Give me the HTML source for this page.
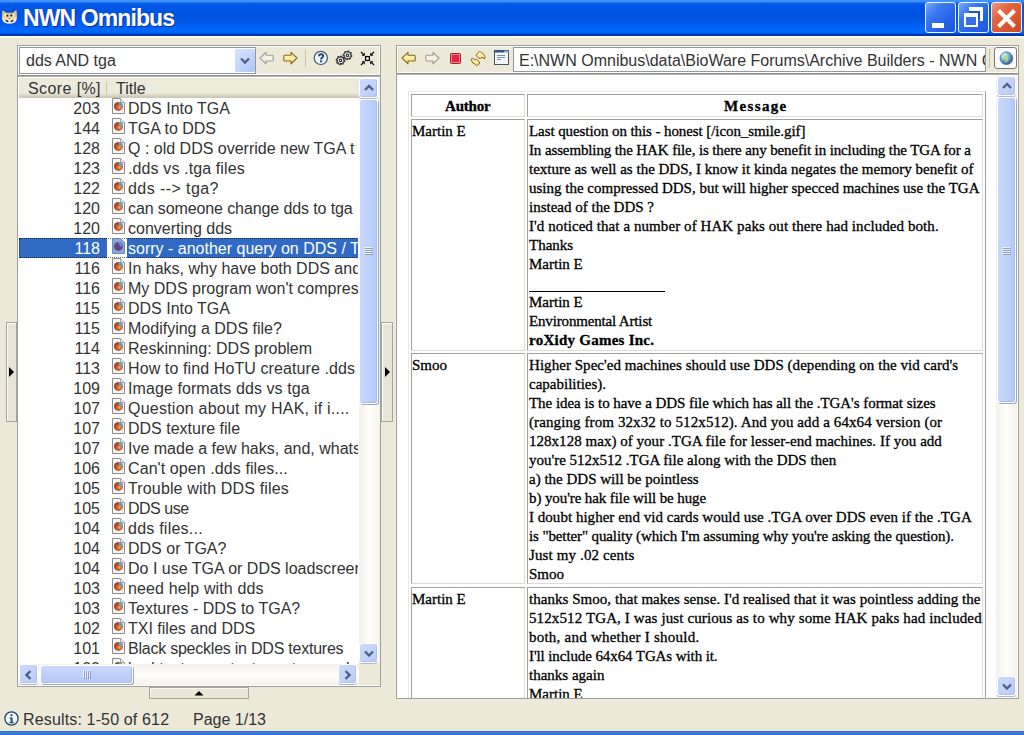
<!DOCTYPE html>
<html><head><meta charset="utf-8">
<style>
*{box-sizing:border-box}
html,body{margin:0;padding:0}
body{width:1024px;height:735px;overflow:hidden;position:relative;background:#ECE9D8;font-family:"Liberation Sans",sans-serif;font-size:16px;color:#000}
.a{position:absolute}
.t16{font-size:16px;line-height:20px;white-space:nowrap;color:#333}
.serif{font-family:"Liberation Serif",serif;font-size:15px;line-height:19px;white-space:nowrap;-webkit-text-stroke:0.3px #000}
.sbtn{position:absolute;width:19px;height:20px;border:1px solid #fff;border-radius:3px;background:linear-gradient(135deg,#CCD9FC 0%,#C2D2FA 60%,#B6CAF6 100%);box-shadow:inset -1px -1px 0 #B0C2EC, 0 1px 0 #AEB8C8}
.thumbv{position:absolute;border:1px solid #fff;border-radius:3px;background:linear-gradient(90deg,#CAD8FC,#BED0FA 60%,#B4C8F8);box-shadow:inset -1px -1px 0 #A8BCEA, 1px 1px 0 #98A8C4}
</style></head><body>
<svg width="0" height="0" style="position:absolute"><defs>
<radialGradient id="ff" cx="0.62" cy="0.6" r="0.62"><stop offset="0" stop-color="#E8B070"/><stop offset="0.45" stop-color="#C86030"/><stop offset="1" stop-color="#983818"/></radialGradient>
<linearGradient id="yel" x1="0" y1="0" x2="0" y2="1"><stop offset="0" stop-color="#FFFCE0"/><stop offset="1" stop-color="#F8DC6A"/></linearGradient>
<radialGradient id="globe" cx="0.35" cy="0.3" r="0.75"><stop offset="0" stop-color="#F4FFFF"/><stop offset="0.45" stop-color="#70B8D0"/><stop offset="1" stop-color="#3A4E98"/></radialGradient>
</defs></svg>

<div class="a" style="left:0;top:0;width:1024px;height:36px;background:linear-gradient(#3D95FF 0,#3A90FF 1.5px,#0A5EEA 3.5px,#0056E6 6px,#0053E0 15px,#005CEC 24px,#0068FF 30px,#0064F6 33px,#0038B8 34.5px,#0030A4 36px)"></div>
<div class="a" style="left:0;top:36px;width:1024px;height:2px;background:linear-gradient(#FFFFFF,#F7F6F0)"></div>
<svg class="a" style="left:1px;top:9px" width="17" height="16" viewBox="0 0 17 16">
<defs><linearGradient id="catg" x1="0" y1="0" x2="0" y2="1"><stop offset="0" stop-color="#D2B97E"/><stop offset=".5" stop-color="#E6D2A4"/><stop offset=".75" stop-color="#F8F0E8"/><stop offset="1" stop-color="#FAF8F4"/></linearGradient></defs>
<path d="M1.3 2.2Q1.6 1 2.6 1.8L5 3.8H12L14.6 1.3Q15.6 0.8 15.7 2.2L15.9 9Q15.9 14.6 8.5 14.8Q1 14.6 1 9Z" fill="url(#catg)"/>
<ellipse cx="5.6" cy="6.2" rx="2" ry="1.5" fill="#FFF6D0"/><ellipse cx="11.2" cy="6.2" rx="2" ry="1.5" fill="#FFF6D0"/>
<ellipse cx="6.4" cy="6.6" rx="1" ry="1.2" fill="#201808"/><ellipse cx="10.4" cy="6.4" rx="1" ry="1.2" fill="#201808"/>
<ellipse cx="8.4" cy="9.6" rx="1" ry=".8" fill="#B08050"/>
<path d="M4.6 11.4L7.4 12.6M9.6 12.6L12.4 11.4" stroke="#1a1410" stroke-width="1.5"/>
</svg>
<div class="a" style="left:23px;top:5px;color:#fff;font-weight:bold;font-size:23px;letter-spacing:-0.9px;line-height:26px;white-space:nowrap;text-shadow:1px 1px 0 #0F2C9C">NWN Omnibus</div>
<div class="a" style="left:925px;top:2px;width:31px;height:31px;border:1px solid #EEF6FF;border-radius:3px;background:linear-gradient(135deg,#7AA8FA 0%,#3C7AF2 30%,#2763E8 65%,#1F57DA 100%)"><div class="a" style="left:6px;top:20px;width:12px;height:5px;background:#fff"></div></div>
<div class="a" style="left:958px;top:2px;width:31px;height:31px;border:1px solid #EEF6FF;border-radius:3px;background:linear-gradient(135deg,#7AA8FA 0%,#3C7AF2 30%,#2763E8 65%,#1F57DA 100%)"><div class="a" style="left:10px;top:8px;width:11px;height:8px;background:#2350C8"></div><div class="a" style="left:10px;top:4px;width:14px;height:3.5px;background:#fff"></div><div class="a" style="left:21px;top:4px;width:3px;height:14px;background:#fff"></div><div class="a" style="left:5px;top:10px;width:14px;height:14px;background:#3A6EE8;border:2px solid #fff;border-top-width:4px"></div></div>
<div class="a" style="left:991px;top:2px;width:31px;height:31px;border:1px solid #EEF6FF;border-radius:3px;background:linear-gradient(135deg,#F09A7A 0%,#E2663E 35%,#D8502A 75%,#C84A26 100%)"><svg class="a" style="left:4px;top:5px" width="21" height="21" viewBox="0 0 21 21"><path d="M2.5 2.5L18.5 18.5M18.5 2.5L2.5 18.5" stroke="#fff" stroke-width="3.9"/></svg></div>
<div class="a" style="left:0;top:730px;width:1024px;height:5px;background:linear-gradient(#DEEEFC 0,#DEEEFC 1px,#3E6AA6 1px,#3E6AA6 2px,#4482D6 2px,#4482D6 3px,#2F79E0 3px)"></div>
<div class="a" style="left:17px;top:45px;width:364px;height:642px;border:1px solid #A0A09B;background:#ECE9D8;box-shadow:inset 1px 1px 0 #fff"></div>
<div class="a" style="left:19px;top:47px;width:237px;height:27px;border:1px solid #8D99A3;background:#fff"></div>
<div class="a t16" style="left:26px;top:51px">dds AND tga</div>
<div class="a" style="left:235px;top:49px;width:20px;height:23px;border-radius:2px;background:linear-gradient(135deg,#D8E4FD,#BCD0FA 70%,#B0C6F6)"></div>
<svg class="a" style="left:240px;top:57px" width="10" height="7" viewBox="0 0 10 7"><path d="M1 1.5L5 5.5L9 1.5" stroke="#4D6185" stroke-width="2.4" fill="none"/></svg>
<svg class="a" style="left:259px;top:51px" width="15" height="14" viewBox="0 0 15 14"><path d="M1 7L7 1.3V4.3H13.2C13.8 4.3 14.2 4.7 14.2 5.3V9C14.2 9.6 13.8 10 13.2 10H7V12.9Z" fill="#F2F0E8" stroke="#A09E94" stroke-width="1.1" stroke-linejoin="round"/></svg>
<svg class="a" style="left:283px;top:51px" width="15" height="14" viewBox="0 0 15 14"><path d="M14 7L8 1.3V4.3H1.8C1.2 4.3 0.8 4.7 0.8 5.3V9C0.8 9.6 1.2 10 1.8 10H8V12.9Z" fill="url(#yel)" stroke="#8A6A18" stroke-width="1.1" stroke-linejoin="round"/></svg>
<div class="a" style="left:305px;top:50px;width:1px;height:17px;background:#C5C2B2"></div>
<svg class="a" style="left:313px;top:50px" width="16" height="16" viewBox="0 0 16 16"><circle cx="7.8" cy="7.9" r="6.6" fill="#EEF6FB" stroke="#3E5878" stroke-width="1.2"/><path d="M6 6.3C6 4.9 7 4.3 8.1 4.3C9.3 4.3 10.2 5 10.2 6.1C10.2 7.2 9.3 7.6 8.7 8.1C8.2 8.5 8.1 8.8 8.1 9.6" fill="none" stroke="#24466E" stroke-width="1.9"/><rect x="7.1" y="10.4" width="2" height="1.9" fill="#24466E"/></svg>
<svg class="a" style="left:334px;top:49px" width="20" height="18" viewBox="0 0 20 18"><path d="M10.78 11.82 L10.61 12.65 L9.38 12.94 L9.03 13.47 L9.23 14.72 L8.53 15.19 L7.45 14.53 L6.82 14.65 L6.08 15.68 L5.25 15.51 L4.96 14.28 L4.43 13.93 L3.18 14.13 L2.71 13.43 L3.37 12.35 L3.25 11.72 L2.22 10.98 L2.39 10.15 L3.62 9.86 L3.97 9.33 L3.77 8.08 L4.47 7.61 L5.55 8.27 L6.18 8.15 L6.92 7.12 L7.75 7.29 L8.04 8.52 L8.57 8.87 L9.82 8.67 L10.29 9.37 L9.63 10.45 L9.75 11.08Z" fill="#FFFFFF" stroke="#333" stroke-width="1.25" stroke-linejoin="round"/><circle cx="6.5" cy="11.4" r="1.25" fill="#fff" stroke="#333" stroke-width="1.2"/><path d="M17.78 6.72 L17.61 7.55 L16.38 7.84 L16.03 8.37 L16.23 9.62 L15.53 10.09 L14.45 9.43 L13.82 9.55 L13.08 10.58 L12.25 10.41 L11.96 9.18 L11.43 8.83 L10.18 9.03 L9.71 8.33 L10.37 7.25 L10.25 6.62 L9.22 5.88 L9.39 5.05 L10.62 4.76 L10.97 4.23 L10.77 2.98 L11.47 2.51 L12.55 3.17 L13.18 3.05 L13.92 2.02 L14.75 2.19 L15.04 3.42 L15.57 3.77 L16.82 3.57 L17.29 4.27 L16.63 5.35 L16.75 5.98Z" fill="#FFFFFF" stroke="#333" stroke-width="1.25" stroke-linejoin="round"/><circle cx="13.5" cy="6.3" r="1.25" fill="#fff" stroke="#333" stroke-width="1.2"/></svg>
<svg class="a" style="left:360px;top:51px" width="15" height="15" viewBox="0 0 15 15"><rect x="5.6" y="5.6" width="3.8" height="3.8" fill="#fff" stroke="#000" stroke-width="1.3"/><path d="M1 1L3.6 3.6M14 1L11.4 3.6M1 14L3.6 11.4M14 14L11.4 11.4" stroke="#000" stroke-width="1.2"/><path d="M1.6 4.8H4.8V1.6Z M13.4 4.8H10.2V1.6Z M1.6 10.2H4.8V13.4Z M13.4 10.2H10.2V13.4Z" fill="#000"/></svg>
<div class="a" style="left:379px;top:46px;width:1px;height:29px;background:#fff"></div>
<div class="a" style="left:18px;top:74px;width:362px;height:1px;background:#fff"></div>
<div class="a" style="left:18px;top:75px;width:362px;height:2px;background:linear-gradient(#8E8E8A 0,#8E8E8A 1px,#B6B4AA 1px)"></div>
<div class="a" style="left:18px;top:77px;width:362px;height:609px;background:#fff"></div>
<div class="a" style="left:19px;top:78px;width:340px;height:20px;background:linear-gradient(#EBEADB 0,#EBEADB 15px,#E4E2D3 16px,#DCD9C9 17px,#D2CFBF 18px,#C9C6B6 20px)"></div>
<div class="a t16" style="left:28px;top:79px;letter-spacing:0.4px">Score [%]</div>
<div class="a" style="left:106px;top:82px;width:1px;height:12px;background:#C7C5B2"></div>
<div class="a t16" style="left:116px;top:79px">Title</div>
<div class="a" style="left:19px;top:98px;width:339px;height:566px;overflow:hidden">
<svg class="a" style="left:93px;top:0px" width="14" height="17" viewBox="0 0 14 17"><path d="M0.5 0.5H8.5L12.5 4.5V15.5H0.5Z" fill="#F6F6F4" stroke="#8C8C8C"/><path d="M8.5 0.5V4.5H12.5" fill="#E8E8E8" stroke="#A8A8A8"/><circle cx="6.5" cy="8.4" r="4.5" fill="url(#ff)"/><path d="M6.3 3.9A4.5 4.5 0 0 1 11 8.2L8.2 8.6Q7 6.5 6.3 3.9Z" fill="#6AA0C0"/></svg>
<div class="a t16" style="right:258px;top:1px;color:#333">203</div>
<div class="a t16" style="left:109px;top:1px;color:#333">DDS Into TGA</div>
<svg class="a" style="left:93px;top:20px" width="14" height="17" viewBox="0 0 14 17"><path d="M0.5 0.5H8.5L12.5 4.5V15.5H0.5Z" fill="#F6F6F4" stroke="#8C8C8C"/><path d="M8.5 0.5V4.5H12.5" fill="#E8E8E8" stroke="#A8A8A8"/><circle cx="6.5" cy="8.4" r="4.5" fill="url(#ff)"/><path d="M6.3 3.9A4.5 4.5 0 0 1 11 8.2L8.2 8.6Q7 6.5 6.3 3.9Z" fill="#6AA0C0"/></svg>
<div class="a t16" style="right:258px;top:21px;color:#333">144</div>
<div class="a t16" style="left:109px;top:21px;color:#333">TGA to DDS</div>
<svg class="a" style="left:93px;top:40px" width="14" height="17" viewBox="0 0 14 17"><path d="M0.5 0.5H8.5L12.5 4.5V15.5H0.5Z" fill="#F6F6F4" stroke="#8C8C8C"/><path d="M8.5 0.5V4.5H12.5" fill="#E8E8E8" stroke="#A8A8A8"/><circle cx="6.5" cy="8.4" r="4.5" fill="url(#ff)"/><path d="M6.3 3.9A4.5 4.5 0 0 1 11 8.2L8.2 8.6Q7 6.5 6.3 3.9Z" fill="#6AA0C0"/></svg>
<div class="a t16" style="right:258px;top:41px;color:#333">128</div>
<div class="a t16" style="left:109px;top:41px;color:#333">Q : old DDS override new TGA t</div>
<svg class="a" style="left:93px;top:60px" width="14" height="17" viewBox="0 0 14 17"><path d="M0.5 0.5H8.5L12.5 4.5V15.5H0.5Z" fill="#F6F6F4" stroke="#8C8C8C"/><path d="M8.5 0.5V4.5H12.5" fill="#E8E8E8" stroke="#A8A8A8"/><circle cx="6.5" cy="8.4" r="4.5" fill="url(#ff)"/><path d="M6.3 3.9A4.5 4.5 0 0 1 11 8.2L8.2 8.6Q7 6.5 6.3 3.9Z" fill="#6AA0C0"/></svg>
<div class="a t16" style="right:258px;top:61px;color:#333">123</div>
<div class="a t16" style="left:109px;top:61px;color:#333;letter-spacing:0.118px">.dds vs .tga files</div>
<svg class="a" style="left:93px;top:80px" width="14" height="17" viewBox="0 0 14 17"><path d="M0.5 0.5H8.5L12.5 4.5V15.5H0.5Z" fill="#F6F6F4" stroke="#8C8C8C"/><path d="M8.5 0.5V4.5H12.5" fill="#E8E8E8" stroke="#A8A8A8"/><circle cx="6.5" cy="8.4" r="4.5" fill="url(#ff)"/><path d="M6.3 3.9A4.5 4.5 0 0 1 11 8.2L8.2 8.6Q7 6.5 6.3 3.9Z" fill="#6AA0C0"/></svg>
<div class="a t16" style="right:258px;top:81px;color:#333">122</div>
<div class="a t16" style="left:109px;top:81px;color:#333;letter-spacing:0.418px">dds --&gt; tga?</div>
<svg class="a" style="left:93px;top:100px" width="14" height="17" viewBox="0 0 14 17"><path d="M0.5 0.5H8.5L12.5 4.5V15.5H0.5Z" fill="#F6F6F4" stroke="#8C8C8C"/><path d="M8.5 0.5V4.5H12.5" fill="#E8E8E8" stroke="#A8A8A8"/><circle cx="6.5" cy="8.4" r="4.5" fill="url(#ff)"/><path d="M6.3 3.9A4.5 4.5 0 0 1 11 8.2L8.2 8.6Q7 6.5 6.3 3.9Z" fill="#6AA0C0"/></svg>
<div class="a t16" style="right:258px;top:101px;color:#333">120</div>
<div class="a t16" style="left:109px;top:101px;color:#333;letter-spacing:-0.107px">can someone change dds to tga</div>
<svg class="a" style="left:93px;top:120px" width="14" height="17" viewBox="0 0 14 17"><path d="M0.5 0.5H8.5L12.5 4.5V15.5H0.5Z" fill="#F6F6F4" stroke="#8C8C8C"/><path d="M8.5 0.5V4.5H12.5" fill="#E8E8E8" stroke="#A8A8A8"/><circle cx="6.5" cy="8.4" r="4.5" fill="url(#ff)"/><path d="M6.3 3.9A4.5 4.5 0 0 1 11 8.2L8.2 8.6Q7 6.5 6.3 3.9Z" fill="#6AA0C0"/></svg>
<div class="a t16" style="right:258px;top:121px;color:#333">120</div>
<div class="a t16" style="left:109px;top:121px;color:#333">converting dds</div>
<div class="a" style="left:0;top:140px;width:88px;height:20px;background:#316AC5"></div>
<div class="a" style="left:108px;top:140px;width:240px;height:20px;background:#316AC5"></div>
<div class="a" style="left:0;top:140px;width:360px;height:20px;border:1px dotted #000;opacity:.55"></div>
<svg class="a" style="left:93px;top:140px" width="14" height="17" viewBox="0 0 14 17"><path d="M0.5 0.5H8.5L12.5 4.5V15.5H0.5Z" fill="#8FA6DA" stroke="#7088C8"/><circle cx="6.5" cy="8.4" r="4.5" fill="#5A4A8A"/><path d="M6.3 3.9A4.5 4.5 0 0 1 11 8.2L8.2 8.6Q7 6.5 6.3 3.9Z" fill="#6A8CC8"/></svg>
<div class="a t16" style="right:258px;top:141px;color:#fff">118</div>
<div class="a t16" style="left:109px;top:141px;color:#fff">sorry - another query on DDS / TGA</div>
<svg class="a" style="left:93px;top:160px" width="14" height="17" viewBox="0 0 14 17"><path d="M0.5 0.5H8.5L12.5 4.5V15.5H0.5Z" fill="#F6F6F4" stroke="#8C8C8C"/><path d="M8.5 0.5V4.5H12.5" fill="#E8E8E8" stroke="#A8A8A8"/><circle cx="6.5" cy="8.4" r="4.5" fill="url(#ff)"/><path d="M6.3 3.9A4.5 4.5 0 0 1 11 8.2L8.2 8.6Q7 6.5 6.3 3.9Z" fill="#6AA0C0"/></svg>
<div class="a t16" style="right:258px;top:161px;color:#333">116</div>
<div class="a t16" style="left:109px;top:161px;color:#333">In haks, why have both DDS and TGA</div>
<svg class="a" style="left:93px;top:180px" width="14" height="17" viewBox="0 0 14 17"><path d="M0.5 0.5H8.5L12.5 4.5V15.5H0.5Z" fill="#F6F6F4" stroke="#8C8C8C"/><path d="M8.5 0.5V4.5H12.5" fill="#E8E8E8" stroke="#A8A8A8"/><circle cx="6.5" cy="8.4" r="4.5" fill="url(#ff)"/><path d="M6.3 3.9A4.5 4.5 0 0 1 11 8.2L8.2 8.6Q7 6.5 6.3 3.9Z" fill="#6AA0C0"/></svg>
<div class="a t16" style="right:258px;top:181px;color:#333">116</div>
<div class="a t16" style="left:109px;top:181px;color:#333">My DDS program won't compress</div>
<svg class="a" style="left:93px;top:200px" width="14" height="17" viewBox="0 0 14 17"><path d="M0.5 0.5H8.5L12.5 4.5V15.5H0.5Z" fill="#F6F6F4" stroke="#8C8C8C"/><path d="M8.5 0.5V4.5H12.5" fill="#E8E8E8" stroke="#A8A8A8"/><circle cx="6.5" cy="8.4" r="4.5" fill="url(#ff)"/><path d="M6.3 3.9A4.5 4.5 0 0 1 11 8.2L8.2 8.6Q7 6.5 6.3 3.9Z" fill="#6AA0C0"/></svg>
<div class="a t16" style="right:258px;top:201px;color:#333">115</div>
<div class="a t16" style="left:109px;top:201px;color:#333">DDS Into TGA</div>
<svg class="a" style="left:93px;top:220px" width="14" height="17" viewBox="0 0 14 17"><path d="M0.5 0.5H8.5L12.5 4.5V15.5H0.5Z" fill="#F6F6F4" stroke="#8C8C8C"/><path d="M8.5 0.5V4.5H12.5" fill="#E8E8E8" stroke="#A8A8A8"/><circle cx="6.5" cy="8.4" r="4.5" fill="url(#ff)"/><path d="M6.3 3.9A4.5 4.5 0 0 1 11 8.2L8.2 8.6Q7 6.5 6.3 3.9Z" fill="#6AA0C0"/></svg>
<div class="a t16" style="right:258px;top:221px;color:#333">115</div>
<div class="a t16" style="left:109px;top:221px;color:#333">Modifying a DDS file?</div>
<svg class="a" style="left:93px;top:240px" width="14" height="17" viewBox="0 0 14 17"><path d="M0.5 0.5H8.5L12.5 4.5V15.5H0.5Z" fill="#F6F6F4" stroke="#8C8C8C"/><path d="M8.5 0.5V4.5H12.5" fill="#E8E8E8" stroke="#A8A8A8"/><circle cx="6.5" cy="8.4" r="4.5" fill="url(#ff)"/><path d="M6.3 3.9A4.5 4.5 0 0 1 11 8.2L8.2 8.6Q7 6.5 6.3 3.9Z" fill="#6AA0C0"/></svg>
<div class="a t16" style="right:258px;top:241px;color:#333">114</div>
<div class="a t16" style="left:109px;top:241px;color:#333">Reskinning: DDS problem</div>
<svg class="a" style="left:93px;top:260px" width="14" height="17" viewBox="0 0 14 17"><path d="M0.5 0.5H8.5L12.5 4.5V15.5H0.5Z" fill="#F6F6F4" stroke="#8C8C8C"/><path d="M8.5 0.5V4.5H12.5" fill="#E8E8E8" stroke="#A8A8A8"/><circle cx="6.5" cy="8.4" r="4.5" fill="url(#ff)"/><path d="M6.3 3.9A4.5 4.5 0 0 1 11 8.2L8.2 8.6Q7 6.5 6.3 3.9Z" fill="#6AA0C0"/></svg>
<div class="a t16" style="right:258px;top:261px;color:#333">113</div>
<div class="a t16" style="left:109px;top:261px;color:#333;letter-spacing:0.103px">How to find HoTU creature .dds</div>
<svg class="a" style="left:93px;top:280px" width="14" height="17" viewBox="0 0 14 17"><path d="M0.5 0.5H8.5L12.5 4.5V15.5H0.5Z" fill="#F6F6F4" stroke="#8C8C8C"/><path d="M8.5 0.5V4.5H12.5" fill="#E8E8E8" stroke="#A8A8A8"/><circle cx="6.5" cy="8.4" r="4.5" fill="url(#ff)"/><path d="M6.3 3.9A4.5 4.5 0 0 1 11 8.2L8.2 8.6Q7 6.5 6.3 3.9Z" fill="#6AA0C0"/></svg>
<div class="a t16" style="right:258px;top:281px;color:#333">109</div>
<div class="a t16" style="left:109px;top:281px;color:#333;letter-spacing:0.087px">Image formats dds vs tga</div>
<svg class="a" style="left:93px;top:300px" width="14" height="17" viewBox="0 0 14 17"><path d="M0.5 0.5H8.5L12.5 4.5V15.5H0.5Z" fill="#F6F6F4" stroke="#8C8C8C"/><path d="M8.5 0.5V4.5H12.5" fill="#E8E8E8" stroke="#A8A8A8"/><circle cx="6.5" cy="8.4" r="4.5" fill="url(#ff)"/><path d="M6.3 3.9A4.5 4.5 0 0 1 11 8.2L8.2 8.6Q7 6.5 6.3 3.9Z" fill="#6AA0C0"/></svg>
<div class="a t16" style="right:258px;top:301px;color:#333">107</div>
<div class="a t16" style="left:109px;top:301px;color:#333;letter-spacing:0.233px">Question about my HAK, if i....</div>
<svg class="a" style="left:93px;top:320px" width="14" height="17" viewBox="0 0 14 17"><path d="M0.5 0.5H8.5L12.5 4.5V15.5H0.5Z" fill="#F6F6F4" stroke="#8C8C8C"/><path d="M8.5 0.5V4.5H12.5" fill="#E8E8E8" stroke="#A8A8A8"/><circle cx="6.5" cy="8.4" r="4.5" fill="url(#ff)"/><path d="M6.3 3.9A4.5 4.5 0 0 1 11 8.2L8.2 8.6Q7 6.5 6.3 3.9Z" fill="#6AA0C0"/></svg>
<div class="a t16" style="right:258px;top:321px;color:#333">107</div>
<div class="a t16" style="left:109px;top:321px;color:#333">DDS texture file</div>
<svg class="a" style="left:93px;top:340px" width="14" height="17" viewBox="0 0 14 17"><path d="M0.5 0.5H8.5L12.5 4.5V15.5H0.5Z" fill="#F6F6F4" stroke="#8C8C8C"/><path d="M8.5 0.5V4.5H12.5" fill="#E8E8E8" stroke="#A8A8A8"/><circle cx="6.5" cy="8.4" r="4.5" fill="url(#ff)"/><path d="M6.3 3.9A4.5 4.5 0 0 1 11 8.2L8.2 8.6Q7 6.5 6.3 3.9Z" fill="#6AA0C0"/></svg>
<div class="a t16" style="right:258px;top:341px;color:#333">107</div>
<div class="a t16" style="left:109px;top:341px;color:#333">Ive made a few haks, and, whats</div>
<svg class="a" style="left:93px;top:360px" width="14" height="17" viewBox="0 0 14 17"><path d="M0.5 0.5H8.5L12.5 4.5V15.5H0.5Z" fill="#F6F6F4" stroke="#8C8C8C"/><path d="M8.5 0.5V4.5H12.5" fill="#E8E8E8" stroke="#A8A8A8"/><circle cx="6.5" cy="8.4" r="4.5" fill="url(#ff)"/><path d="M6.3 3.9A4.5 4.5 0 0 1 11 8.2L8.2 8.6Q7 6.5 6.3 3.9Z" fill="#6AA0C0"/></svg>
<div class="a t16" style="right:258px;top:361px;color:#333">106</div>
<div class="a t16" style="left:109px;top:361px;color:#333;letter-spacing:0.087px">Can't open .dds files...</div>
<svg class="a" style="left:93px;top:380px" width="14" height="17" viewBox="0 0 14 17"><path d="M0.5 0.5H8.5L12.5 4.5V15.5H0.5Z" fill="#F6F6F4" stroke="#8C8C8C"/><path d="M8.5 0.5V4.5H12.5" fill="#E8E8E8" stroke="#A8A8A8"/><circle cx="6.5" cy="8.4" r="4.5" fill="url(#ff)"/><path d="M6.3 3.9A4.5 4.5 0 0 1 11 8.2L8.2 8.6Q7 6.5 6.3 3.9Z" fill="#6AA0C0"/></svg>
<div class="a t16" style="right:258px;top:381px;color:#333">105</div>
<div class="a t16" style="left:109px;top:381px;color:#333;letter-spacing:0.143px">Trouble with DDS files</div>
<svg class="a" style="left:93px;top:400px" width="14" height="17" viewBox="0 0 14 17"><path d="M0.5 0.5H8.5L12.5 4.5V15.5H0.5Z" fill="#F6F6F4" stroke="#8C8C8C"/><path d="M8.5 0.5V4.5H12.5" fill="#E8E8E8" stroke="#A8A8A8"/><circle cx="6.5" cy="8.4" r="4.5" fill="url(#ff)"/><path d="M6.3 3.9A4.5 4.5 0 0 1 11 8.2L8.2 8.6Q7 6.5 6.3 3.9Z" fill="#6AA0C0"/></svg>
<div class="a t16" style="right:258px;top:401px;color:#333">105</div>
<div class="a t16" style="left:109px;top:401px;color:#333;letter-spacing:-0.500px">DDS use</div>
<svg class="a" style="left:93px;top:420px" width="14" height="17" viewBox="0 0 14 17"><path d="M0.5 0.5H8.5L12.5 4.5V15.5H0.5Z" fill="#F6F6F4" stroke="#8C8C8C"/><path d="M8.5 0.5V4.5H12.5" fill="#E8E8E8" stroke="#A8A8A8"/><circle cx="6.5" cy="8.4" r="4.5" fill="url(#ff)"/><path d="M6.3 3.9A4.5 4.5 0 0 1 11 8.2L8.2 8.6Q7 6.5 6.3 3.9Z" fill="#6AA0C0"/></svg>
<div class="a t16" style="right:258px;top:421px;color:#333">104</div>
<div class="a t16" style="left:109px;top:421px;color:#333;letter-spacing:0.236px">dds files...</div>
<svg class="a" style="left:93px;top:440px" width="14" height="17" viewBox="0 0 14 17"><path d="M0.5 0.5H8.5L12.5 4.5V15.5H0.5Z" fill="#F6F6F4" stroke="#8C8C8C"/><path d="M8.5 0.5V4.5H12.5" fill="#E8E8E8" stroke="#A8A8A8"/><circle cx="6.5" cy="8.4" r="4.5" fill="url(#ff)"/><path d="M6.3 3.9A4.5 4.5 0 0 1 11 8.2L8.2 8.6Q7 6.5 6.3 3.9Z" fill="#6AA0C0"/></svg>
<div class="a t16" style="right:258px;top:441px;color:#333">104</div>
<div class="a t16" style="left:109px;top:441px;color:#333">DDS or TGA?</div>
<svg class="a" style="left:93px;top:460px" width="14" height="17" viewBox="0 0 14 17"><path d="M0.5 0.5H8.5L12.5 4.5V15.5H0.5Z" fill="#F6F6F4" stroke="#8C8C8C"/><path d="M8.5 0.5V4.5H12.5" fill="#E8E8E8" stroke="#A8A8A8"/><circle cx="6.5" cy="8.4" r="4.5" fill="url(#ff)"/><path d="M6.3 3.9A4.5 4.5 0 0 1 11 8.2L8.2 8.6Q7 6.5 6.3 3.9Z" fill="#6AA0C0"/></svg>
<div class="a t16" style="right:258px;top:461px;color:#333">104</div>
<div class="a t16" style="left:109px;top:461px;color:#333">Do I use TGA or DDS loadscreens</div>
<svg class="a" style="left:93px;top:480px" width="14" height="17" viewBox="0 0 14 17"><path d="M0.5 0.5H8.5L12.5 4.5V15.5H0.5Z" fill="#F6F6F4" stroke="#8C8C8C"/><path d="M8.5 0.5V4.5H12.5" fill="#E8E8E8" stroke="#A8A8A8"/><circle cx="6.5" cy="8.4" r="4.5" fill="url(#ff)"/><path d="M6.3 3.9A4.5 4.5 0 0 1 11 8.2L8.2 8.6Q7 6.5 6.3 3.9Z" fill="#6AA0C0"/></svg>
<div class="a t16" style="right:258px;top:481px;color:#333">103</div>
<div class="a t16" style="left:109px;top:481px;color:#333;letter-spacing:0.118px">need help with dds</div>
<svg class="a" style="left:93px;top:500px" width="14" height="17" viewBox="0 0 14 17"><path d="M0.5 0.5H8.5L12.5 4.5V15.5H0.5Z" fill="#F6F6F4" stroke="#8C8C8C"/><path d="M8.5 0.5V4.5H12.5" fill="#E8E8E8" stroke="#A8A8A8"/><circle cx="6.5" cy="8.4" r="4.5" fill="url(#ff)"/><path d="M6.3 3.9A4.5 4.5 0 0 1 11 8.2L8.2 8.6Q7 6.5 6.3 3.9Z" fill="#6AA0C0"/></svg>
<div class="a t16" style="right:258px;top:501px;color:#333">103</div>
<div class="a t16" style="left:109px;top:501px;color:#333">Textures - DDS to TGA?</div>
<svg class="a" style="left:93px;top:520px" width="14" height="17" viewBox="0 0 14 17"><path d="M0.5 0.5H8.5L12.5 4.5V15.5H0.5Z" fill="#F6F6F4" stroke="#8C8C8C"/><path d="M8.5 0.5V4.5H12.5" fill="#E8E8E8" stroke="#A8A8A8"/><circle cx="6.5" cy="8.4" r="4.5" fill="url(#ff)"/><path d="M6.3 3.9A4.5 4.5 0 0 1 11 8.2L8.2 8.6Q7 6.5 6.3 3.9Z" fill="#6AA0C0"/></svg>
<div class="a t16" style="right:258px;top:521px;color:#333">102</div>
<div class="a t16" style="left:109px;top:521px;color:#333">TXI files and DDS</div>
<svg class="a" style="left:93px;top:540px" width="14" height="17" viewBox="0 0 14 17"><path d="M0.5 0.5H8.5L12.5 4.5V15.5H0.5Z" fill="#F6F6F4" stroke="#8C8C8C"/><path d="M8.5 0.5V4.5H12.5" fill="#E8E8E8" stroke="#A8A8A8"/><circle cx="6.5" cy="8.4" r="4.5" fill="url(#ff)"/><path d="M6.3 3.9A4.5 4.5 0 0 1 11 8.2L8.2 8.6Q7 6.5 6.3 3.9Z" fill="#6AA0C0"/></svg>
<div class="a t16" style="right:258px;top:541px;color:#333">101</div>
<div class="a t16" style="left:109px;top:541px;color:#333;letter-spacing:-0.231px">Black speckles in DDS textures</div>
<svg class="a" style="left:93px;top:560px" width="14" height="17" viewBox="0 0 14 17"><path d="M0.5 0.5H8.5L12.5 4.5V15.5H0.5Z" fill="#F6F6F4" stroke="#8C8C8C"/><path d="M8.5 0.5V4.5H12.5" fill="#E8E8E8" stroke="#A8A8A8"/><circle cx="6.5" cy="8.4" r="4.5" fill="url(#ff)"/><path d="M6.3 3.9A4.5 4.5 0 0 1 11 8.2L8.2 8.6Q7 6.5 6.3 3.9Z" fill="#6AA0C0"/></svg>
<div class="a t16" style="right:258px;top:561px;color:#333">100</div>
<div class="a t16" style="left:109px;top:561px;color:#333">bad textures - textures to are ok big?</div>
</div>
<div class="a" style="left:359px;top:77px;width:21px;height:587px;background:linear-gradient(90deg,#F3F1EC,#FEFEFB 50%,#F4F2EC)"></div>
<div class="sbtn" style="left:359px;top:78px"></div>
<svg class="a" style="left:364px;top:84px" width="10" height="8" viewBox="0 0 10 8"><path d="M1 6L5 2L9 6" stroke="#4D6185" stroke-width="2.3" fill="none"/></svg>
<div class="thumbv" style="left:359px;top:99px;width:19px;height:305px"></div>
<svg class="a" style="left:364px;top:246px" width="9" height="10"><path d="M0 1.5H8M0 3.5H8M0 5.5H8M0 7.5H8" stroke="#EEF4FE" stroke-width="1"/><path d="M1 2.5H9M1 4.5H9M1 6.5H9M1 8.5H9" stroke="#8E9CC6" stroke-width="1"/></svg>
<div class="sbtn" style="left:359px;top:643px"></div>
<svg class="a" style="left:364px;top:650px" width="10" height="7" viewBox="0 0 10 7"><path d="M1 1.5L5 5.5L9 1.5" stroke="#4D6185" stroke-width="2.4" fill="none"/></svg>
<div class="a" style="left:19px;top:664px;width:340px;height:21px;background:linear-gradient(#F3F1EC,#FEFEFB 50%,#F4F2EC)"></div>
<div class="a" style="left:359px;top:664px;width:21px;height:21px;background:#ECE9D8"></div>
<div class="sbtn" style="left:19px;top:664px"></div>
<svg class="a" style="left:25px;top:670px" width="7" height="10" viewBox="0 0 7 10"><path d="M5.5 1L1.5 5L5.5 9" stroke="#4D6185" stroke-width="2.4" fill="none"/></svg>
<div class="thumbv" style="left:40px;top:665px;width:93px;height:19px;background:linear-gradient(#C9D8FC,#BCCEFA 60%,#B5C9F8)"></div>
<svg class="a" style="left:82px;top:670px" width="10" height="9"><path d="M1.5 0V8M3.5 0V8M5.5 0V8M7.5 0V8" stroke="#EEF4FE"/><path d="M2.5 1V9M4.5 1V9M6.5 1V9M8.5 1V9" stroke="#8E9CC6"/></svg>
<div class="sbtn" style="left:338px;top:664px"></div>
<svg class="a" style="left:344px;top:670px" width="7" height="10" viewBox="0 0 7 10"><path d="M1.5 1L5.5 5L1.5 9" stroke="#4D6185" stroke-width="2.4" fill="none"/></svg>
<div class="a" style="left:6px;top:322px;width:11px;height:100px;border:1px solid #A7A69C;background:#E8E5D6;box-shadow:inset 1px 1px 0 #fff"></div>
<svg class="a" style="left:9px;top:367px" width="5" height="10" viewBox="0 0 5 10"><path d="M0 0L5 5L0 10Z" fill="#000"/></svg>
<div class="a" style="left:381px;top:322px;width:12px;height:100px;border:1px solid #A7A69C;background:#E8E5D6;box-shadow:inset 1px 1px 0 #fff"></div>
<svg class="a" style="left:385px;top:367px" width="5" height="10" viewBox="0 0 5 10"><path d="M0 0L5 5L0 10Z" fill="#000"/></svg>
<div class="a" style="left:149px;top:687px;width:100px;height:12px;border:1px solid #A7A69C;background:#EAE7D9;box-shadow:inset 1px 1px 0 #F8F8F4"></div>
<svg class="a" style="left:194px;top:691px" width="10" height="5" viewBox="0 0 10 5"><path d="M0.5 4.5L5 0L9.5 4.5Z" fill="#000"/></svg>
<div class="a" style="left:396px;top:45px;width:623px;height:654px;border:1px solid #A0A09B;background:#ECE9D8;box-shadow:inset 1px 1px 0 #fff"></div>
<svg class="a" style="left:401px;top:51px" width="15" height="14" viewBox="0 0 15 14"><path d="M1 7L7 1.3V4.3H13.2C13.8 4.3 14.2 4.7 14.2 5.3V9C14.2 9.6 13.8 10 13.2 10H7V12.9Z" fill="url(#yel)" stroke="#8A6A18" stroke-width="1.1" stroke-linejoin="round"/></svg>
<svg class="a" style="left:425px;top:51px" width="15" height="14" viewBox="0 0 15 14"><path d="M14 7L8 1.3V4.3H1.8C1.2 4.3 0.8 4.7 0.8 5.3V9C0.8 9.6 1.2 10 1.8 10H8V12.9Z" fill="#F2F0E8" stroke="#A09E94" stroke-width="1.1" stroke-linejoin="round"/></svg>
<div class="a" style="left:450px;top:53px;width:11px;height:11px;background:#E0283A;border:1px solid #9A2030;border-radius:1.5px;box-shadow:inset 0 0 0 1px #F08890"></div>
<svg class="a" style="left:469px;top:49px" width="18" height="18" viewBox="0 0 18 18"><path d="M7 6.2L10.6 2L12.2 3.6L14 4.4L16 7.4L15.6 9.8L13 8.2L11.2 9.6L9 8.6Z" fill="url(#yel)" stroke="#8A6A18" stroke-width="1" stroke-linejoin="round"/><path d="M2 10.2L3.6 9L5.2 11L7.2 10L10.6 13L10.2 15L7.6 16.8L6 15L3.8 14Z" fill="url(#yel)" stroke="#8A6A18" stroke-width="1" stroke-linejoin="round"/></svg>
<svg class="a" style="left:494px;top:50px" width="15" height="15" viewBox="0 0 15 15"><rect x="0.5" y="0.5" width="14" height="14" fill="#F2F8FC" stroke="#4A5260"/><rect x="0.5" y="0.5" width="10" height="2" fill="#2C5494"/><rect x="10.5" y="0.5" width="4" height="2" fill="#7AA8D8"/><path d="M3 5.5H11M3 7.5H11M3 9.5H7" stroke="#7890A8"/></svg>
<div class="a" style="left:513px;top:47px;width:473px;height:25px;border:1px solid #8D99A3;background:#fff;overflow:hidden">
<div class="a t16" style="left:5px;top:3px">E:\NWN Omnibus\data\BioWare Forums\Archive Builders - NWN Custom Content\sorry</div>
</div>
<div class="a" style="left:989px;top:49px;width:1px;height:19px;background:#C5C2B2"></div>
<div class="a" style="left:994px;top:47px;width:23px;height:22px;border:1px solid #7A7A78;border-radius:3px;background:#FBFDFE"></div>
<svg class="a" style="left:999px;top:51px" width="15" height="15" viewBox="0 0 15 15"><circle cx="7.4" cy="7.2" r="6.4" fill="url(#globe)" stroke="#3A5888" stroke-width=".6"/><path d="M4.5 4.2C5.6 3.8 6.8 4.6 7.4 5.6C8.2 6.6 9.6 6.4 9.8 7.6C10 8.8 8.6 9.4 8 10.6C7.6 11.4 7 11.8 6.6 11.2C6.2 10 7 9 6.2 8C5.4 7 4 6.2 4.5 4.2Z" fill="#B8D868" opacity=".9"/></svg>
<div class="a" style="left:1017px;top:46px;width:1px;height:27px;background:#fff"></div>
<div class="a" style="left:397px;top:72px;width:621px;height:1px;background:#fff"></div>
<div class="a" style="left:397px;top:73px;width:621px;height:2px;background:linear-gradient(#8E8E8A 0,#8E8E8A 1px,#B6B4AA 1px)"></div>
<div class="a" style="left:397px;top:75px;width:621px;height:623px;background:#fff"></div>
<div class="a" style="left:996px;top:75px;width:21px;height:623px;background:linear-gradient(90deg,#F3F1EC,#FEFEFB 50%,#F4F2EC)"></div>
<div class="sbtn" style="left:997px;top:76px"></div>
<svg class="a" style="left:1002px;top:82px" width="10" height="8" viewBox="0 0 10 8"><path d="M1 6L5 2L9 6" stroke="#4D6185" stroke-width="2.3" fill="none"/></svg>
<div class="thumbv" style="left:997px;top:97px;width:19px;height:306px"></div>
<svg class="a" style="left:1002px;top:246px" width="9" height="10"><path d="M0 1.5H8M0 3.5H8M0 5.5H8M0 7.5H8" stroke="#EEF4FE" stroke-width="1"/><path d="M1 2.5H9M1 4.5H9M1 6.5H9M1 8.5H9" stroke="#8E9CC6" stroke-width="1"/></svg>
<div class="sbtn" style="left:997px;top:676px"></div>
<svg class="a" style="left:1002px;top:683px" width="10" height="7" viewBox="0 0 10 7"><path d="M1 1.5L5 5.5L9 1.5" stroke="#4D6185" stroke-width="2.4" fill="none"/></svg>
<div class="a" style="left:397px;top:75px;width:599px;height:623px;overflow:hidden">
<div class="a" style="left:11px;top:16px;width:578px;height:700px;border-top:1px solid #E8E8E4;border-left:1px solid #E8E8E4;border-right:1px solid #A0A0A0"></div>
<div class="a" style="left:14px;top:19px;width:114px;height:23px;border:1px solid #DDDDD8;border-top-color:#A0A09C;border-left-color:#A0A09C"></div>
<div class="a" style="left:130px;top:19px;width:456px;height:23px;border:1px solid #DDDDD8;border-top-color:#A0A09C;border-left-color:#A0A09C"></div>
<div class="a" style="left:14px;top:44px;width:114px;height:232px;border:1px solid #DDDDD8;border-top-color:#A0A09C;border-left-color:#A0A09C"></div>
<div class="a" style="left:130px;top:44px;width:456px;height:232px;border:1px solid #DDDDD8;border-top-color:#A0A09C;border-left-color:#A0A09C"></div>
<div class="a" style="left:14px;top:278px;width:114px;height:231px;border:1px solid #DDDDD8;border-top-color:#A0A09C;border-left-color:#A0A09C"></div>
<div class="a" style="left:130px;top:278px;width:456px;height:231px;border:1px solid #DDDDD8;border-top-color:#A0A09C;border-left-color:#A0A09C"></div>
<div class="a" style="left:14px;top:512px;width:114px;height:140px;border:1px solid #DDDDD8;border-top-color:#A0A09C;border-left-color:#A0A09C"></div>
<div class="a" style="left:130px;top:512px;width:456px;height:140px;border:1px solid #DDDDD8;border-top-color:#A0A09C;border-left-color:#A0A09C"></div>
<div class="a serif" style="left:48px;top:22px;font-weight:bold;letter-spacing:-0.2px">Author</div>
<div class="a serif" style="left:327px;top:22px;font-weight:bold;letter-spacing:1.35px">Message</div>
<div class="a serif" style="left:15px;top:47px">Martin E</div>
<div class="a serif" style="left:132px;top:47px;letter-spacing:-0.085px">Last question on this - honest [/icon_smile.gif]</div>
<div class="a serif" style="left:132px;top:66px;letter-spacing:-0.122px">In assembling the HAK file, is there any benefit in including the TGA for a</div>
<div class="a serif" style="left:132px;top:85px">texture as well as the DDS, I know it kinda negates the memory benefit of</div>
<div class="a serif" style="left:132px;top:104px">using the compressed DDS, but will higher specced machines use the TGA</div>
<div class="a serif" style="left:132px;top:123px">instead of the DDS ?</div>
<div class="a serif" style="left:132px;top:142px;letter-spacing:0.077px">I'd noticed that a number of HAK paks out there had included both.</div>
<div class="a serif" style="left:132px;top:161px">Thanks</div>
<div class="a serif" style="left:132px;top:180px">Martin E</div>
<div class="a" style="left:132px;top:216px;width:136px;height:1px;background:#000"></div>
<div class="a serif" style="left:132px;top:218px">Martin E</div>
<div class="a serif" style="left:132px;top:237px;letter-spacing:-0.158px">Environmental Artist</div>
<div class="a serif" style="left:132px;top:256px;letter-spacing:0.250px"><b>roXidy Games Inc.</b></div>
<div class="a serif" style="left:15px;top:281px">Smoo</div>
<div class="a serif" style="left:132px;top:281px;letter-spacing:0.045px">Higher Spec'ed machines should use DDS (depending on the vid card's</div>
<div class="a serif" style="left:132px;top:300px">capabilities).</div>
<div class="a serif" style="left:132px;top:319px;letter-spacing:-0.045px">The idea is to have a DDS file which has all the .TGA's format sizes</div>
<div class="a serif" style="left:132px;top:338px;letter-spacing:0.103px">(ranging from 32x32 to 512x512). And you add a 64x64 version (or</div>
<div class="a serif" style="left:132px;top:357px;letter-spacing:0.031px">128x128 max) of your .TGA file for lesser-end machines. If you add</div>
<div class="a serif" style="left:132px;top:376px">you're 512x512 .TGA file along with the DDS then</div>
<div class="a serif" style="left:132px;top:395px">a) the DDS will be pointless</div>
<div class="a serif" style="left:132px;top:414px;letter-spacing:-0.100px">b) you're hak file will be huge</div>
<div class="a serif" style="left:132px;top:433px;letter-spacing:0.029px">I doubt higher end vid cards would use .TGA over DDS even if the .TGA</div>
<div class="a serif" style="left:132px;top:452px;letter-spacing:-0.113px">is "better" quality (which I'm assuming why you're asking the question).</div>
<div class="a serif" style="left:132px;top:471px;letter-spacing:0.125px">Just my .02 cents</div>
<div class="a serif" style="left:132px;top:490px">Smoo</div>
<div class="a serif" style="left:15px;top:515px">Martin E</div>
<div class="a serif" style="left:132px;top:515px;letter-spacing:0.040px">thanks Smoo, that makes sense. I'd realised that it was pointless adding the</div>
<div class="a serif" style="left:132px;top:534px;letter-spacing:0.119px">512x512 TGA, I was just curious as to why some HAK paks had included</div>
<div class="a serif" style="left:132px;top:553px;letter-spacing:0.231px">both, and whether I should.</div>
<div class="a serif" style="left:132px;top:572px;letter-spacing:-0.097px">I'll include 64x64 TGAs with it.</div>
<div class="a serif" style="left:132px;top:591px">thanks again</div>
<div class="a serif" style="left:132px;top:610px">Martin E</div>
</div>
<svg class="a" style="left:4px;top:711px" width="15" height="15" viewBox="0 0 15 15"><circle cx="7.5" cy="7.5" r="6.6" fill="#F4FAFF" stroke="#1E3E6E" stroke-width="1.3"/><rect x="6.6" y="6.5" width="2" height="5" fill="#1A4A8A"/><rect x="5.5" y="11" width="4.2" height="1.3" fill="#1A4A8A"/><rect x="5.5" y="6.5" width="2" height="1.1" fill="#1A4A8A"/><circle cx="7.5" cy="4.2" r="1.1" fill="#1A4A8A"/></svg>
<div class="a t16" style="left:23px;top:710px;letter-spacing:0.15px">Results: 1-50 of 612</div>
<div class="a t16" style="left:193px;top:710px">Page 1/13</div>
</body></html>
